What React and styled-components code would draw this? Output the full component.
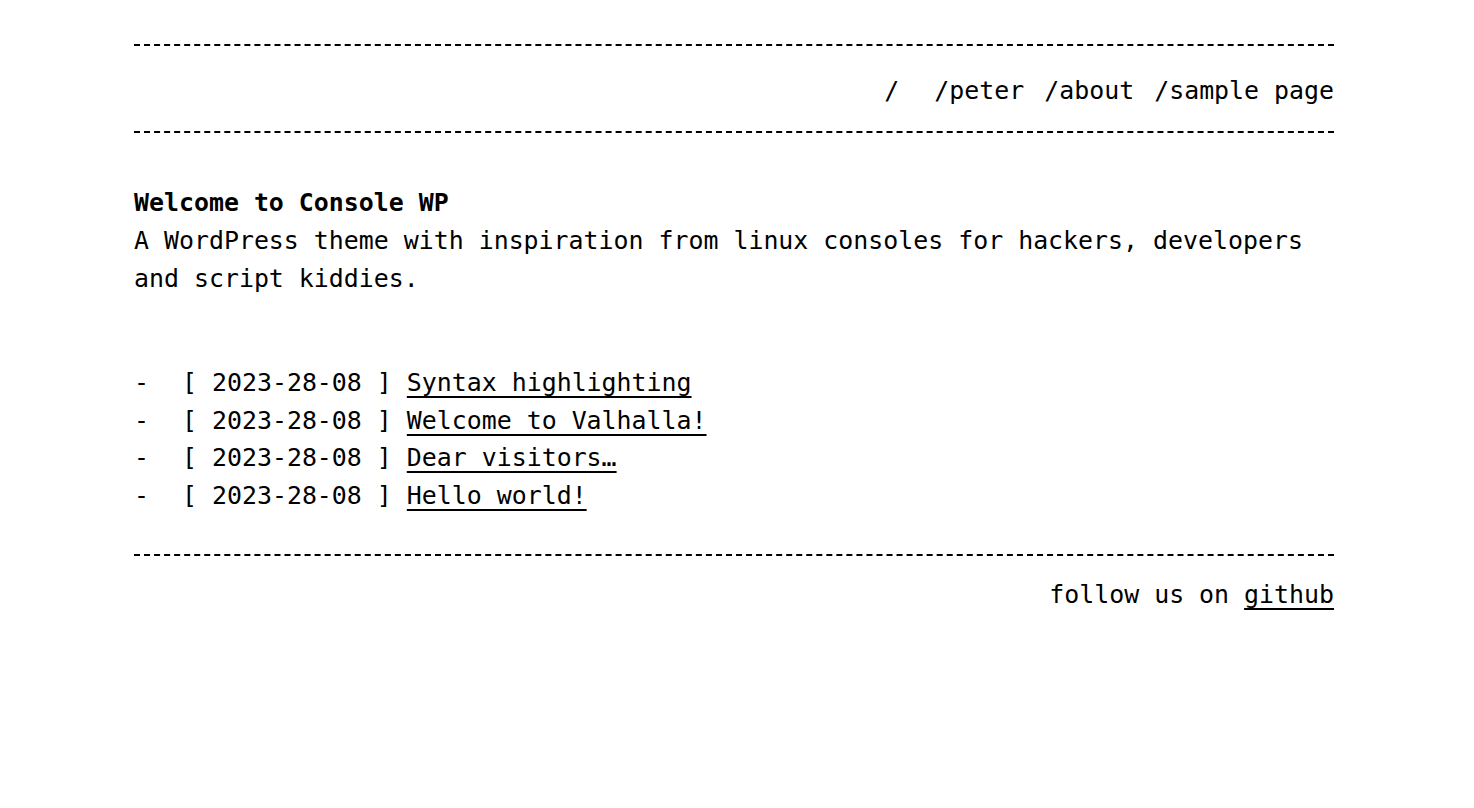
import styled, { createGlobalStyle } from "styled-components";

const GlobalStyle = createGlobalStyle`
    body {
        margin: 0;
        background: #ffffff;
        color: #000000;
        font-family: "DejaVu Sans Mono", "Liberation Mono", monospace;
        font-size: 24.9px;
        line-height: 37.5px;
    }
`;

const posts = [
    { date: "2023-28-08", title: "Syntax highlighting" },
    { date: "2023-28-08", title: "Welcome to Valhalla!" },
    { date: "2023-28-08", title: "Dear visitors…" },
    { date: "2023-28-08", title: "Hello world!" },
];

const Page = styled.div`
    width: 1200px;
    margin-left: 134px;
    padding-top: 44px;
`;

const Header = styled.header`
    border-top: 2px dashed #000;
    border-bottom: 2px dashed #000;
    padding: 26px 0 21px;
`;

const Nav = styled.nav`
    display: flex;
    justify-content: flex-end;
    gap: 20px;
    white-space: pre;
`;

const NavLink = styled.a`
    color: inherit;
    text-decoration: none;
`;

const Intro = styled.section`
    padding-top: 51px;
`;

const Title = styled.h1`
    margin: 0 0 1px;
    font-size: inherit;
    font-weight: bold;
    line-height: inherit;
`;

const Description = styled.p`
    margin: 0;
    width: 1190px;
`;

const PostList = styled.ul`
    list-style: none;
    margin: 67px 0 0;
    padding: 0;
`;

const PostItem = styled.li`
    display: flex;
    white-space: pre;

    &::before {
        content: "-";
        width: 48px;
        flex: none;
    }
`;

const PostLink = styled.a`
    color: inherit;
    text-decoration: underline;
    text-decoration-thickness: 1.5px;
    text-underline-offset: 5px;
`;

const Footer = styled.footer`
    margin-top: 40px;
    border-top: 2px dashed #000;
    padding-top: 20px;
    text-align: right;
`;

const GithubLink = styled.a`
    color: inherit;
    text-decoration: underline;
    text-decoration-thickness: 1.5px;
    text-underline-offset: 5px;
`;

function App() {
    return (
        <>
            <GlobalStyle />
            <Page>
                <Header>
                    <Nav>
                        <NavLink href="#">{"/\u00a0"}</NavLink>
                        <NavLink href="#">/peter</NavLink>
                        <NavLink href="#">/about</NavLink>
                        <NavLink href="#">/sample page</NavLink>
                    </Nav>
                </Header>
                <Intro>
                    <Title>Welcome to Console WP</Title>
                    <Description>
                        A WordPress theme with inspiration from linux consoles for hackers, developers and script kiddies.
                    </Description>
                </Intro>
                <PostList>
                    {posts.map((post) => (
                        <PostItem key={post.title}>
                            <span>{`[ ${post.date} ] `}</span>
                            <PostLink href="#">{post.title}</PostLink>
                        </PostItem>
                    ))}
                </PostList>
                <Footer>
                    follow us on <GithubLink href="#">github</GithubLink>
                </Footer>
            </Page>
        </>
    );
}

export default App;
